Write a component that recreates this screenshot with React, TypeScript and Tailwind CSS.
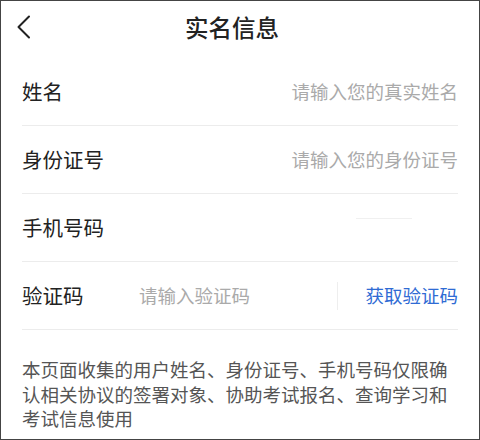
const font = { fontFamily: '"Noto Sans CJK SC", "Noto Sans", sans-serif' };

function Row({
  label,
  placeholder,
  children,
}: {
  label: string;
  placeholder?: string;
  children?: React.ReactNode;
}) {
  return (
    <div className="flex h-[68px] items-center justify-between border-b border-[#ececec]">
      <span className="text-[20.5px] text-[#222]">{label}</span>
      {placeholder && <span className="text-[18.5px] text-[#aaa]">{placeholder}</span>}
      {children}
    </div>
  );
}

export default function App() {
  return (
    <div className="h-[440px] w-[480px] overflow-hidden border border-[#444] bg-white" style={font}>
      {/* Header */}
      <div className="relative flex h-[57px] items-center justify-center pb-1 pr-[16px]">
        <svg
          className="absolute left-[16px] top-[14px]"
          width="14"
          height="24"
          viewBox="0 0 14 24"
          fill="none"
          stroke="#222"
          strokeWidth="2"
          strokeLinecap="round"
          strokeLinejoin="round"
        >
          <polyline points="12,1.5 1.5,12 12,22.5" />
        </svg>
        <h1 className="text-[23.5px] font-medium text-[#222]">实名信息</h1>
      </div>

      <div className="px-[21px]">
        <Row label="姓名" placeholder="请输入您的真实姓名" />
        <Row label="身份证号" placeholder="请输入您的身份证号" />
        <Row label="手机号码">
          <div className="mb-[18px] mr-[46px] h-px w-[56px] bg-[#f0f0f0]" />
        </Row>
        <div className="flex h-[68px] items-center border-b border-[#ececec]">
          <span className="w-[117px] text-[20.5px] text-[#222]">验证码</span>
          <span className="flex-1 text-[18.5px] text-[#aaa]">请输入验证码</span>
          <div className="mr-[27px] h-[28px] w-px bg-[#eee]" />
          <span className="text-[18.5px] text-[#2f6bd4]">获取验证码</span>
        </div>

        <p className="pt-[27px] text-[18.5px] leading-[24.5px] text-[#555]">
          本页面收集的用户姓名、身份证号、手机号码仅限确认相关协议的签署对象、协助考试报名、查询学习和考试信息使用
        </p>
      </div>
    </div>
  );
}
